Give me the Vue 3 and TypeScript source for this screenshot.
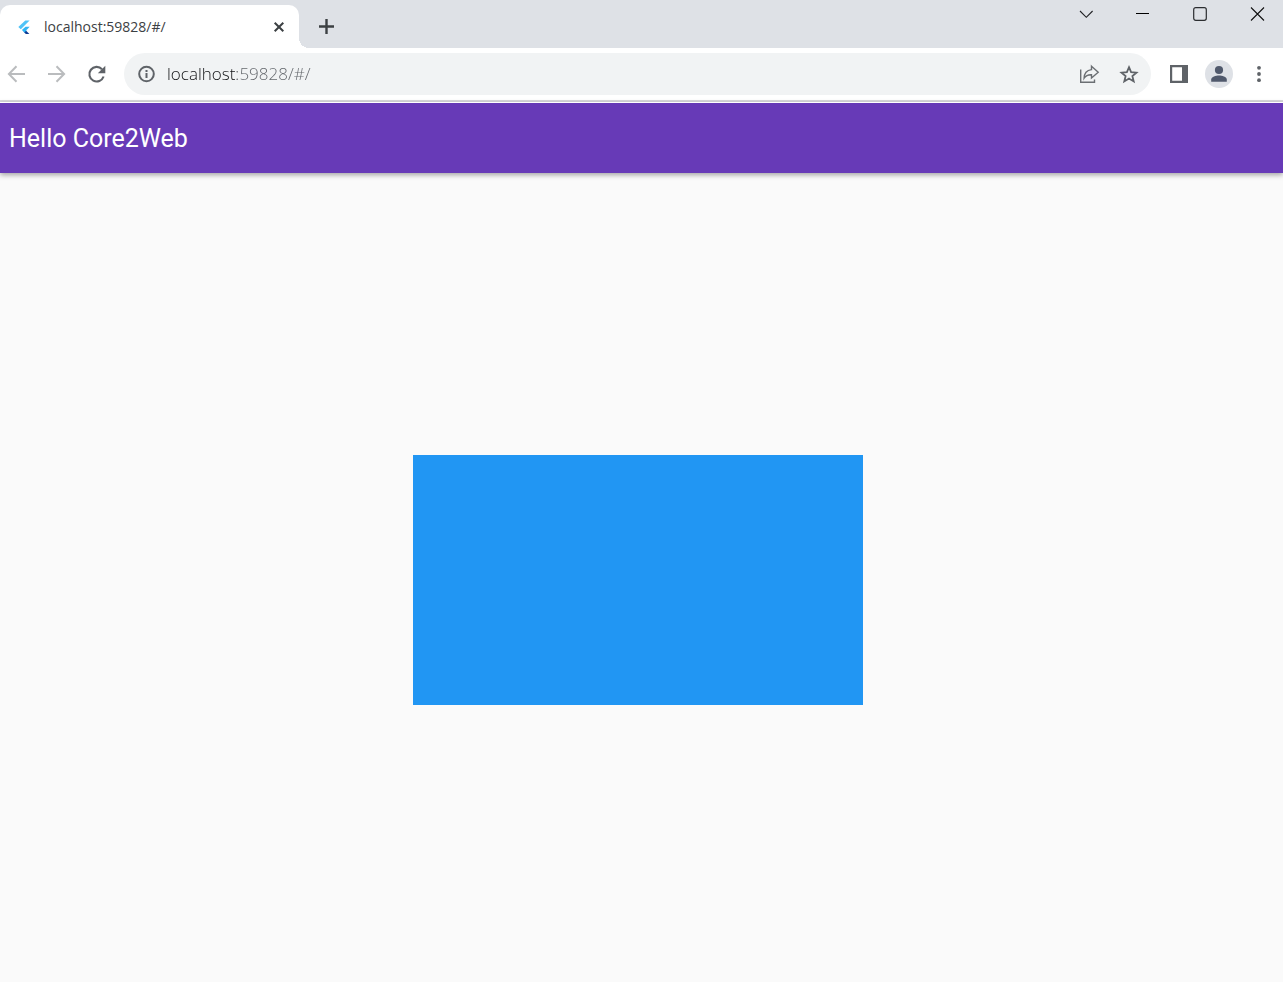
<script setup lang="ts">
import { ref } from 'vue'

const tabTitle = ref('localhost:59828/#/')
const address = ref('localhost:59828/#/')
const heading = ref('Hello Core2Web')
</script>

<template>
  <div class="browser">
    <header class="tab-strip">
      <div class="tab">
        <svg class="favicon" viewBox="0 0 16 16" aria-hidden="true">
          <path d="M9.3 1.6 13.6 1.6 4.8 10.2 2.3 8.1Z" fill="#4fc3f7" />
          <path d="M9.5 7.7H13.7L11.3 10.2 8.6 12.5 5.9 11Z" fill="#35b4f3" />
          <path d="M7.4 12.4 9.6 11.2 13.4 15H9.8Z" fill="#0d3c94" />
          <path d="M6.4 11.2 8.5 9.2 10.6 11.3 8.5 13.4Z" fill="#29b6f6" />
        </svg>
        <span class="tab-title">{{ tabTitle }}</span>
        <button class="tab-close" type="button" aria-label="Close tab">
          <svg viewBox="0 0 16 16"><path d="M3.7 3.7 12.3 12.3M12.3 3.7 3.7 12.3" stroke="#3c4043" stroke-width="2" /></svg>
        </button>
      </div>
      <button class="icon-button new-tab" type="button" aria-label="New tab">
        <svg viewBox="0 0 24 24"><path d="M12.5 5V20M5 12.5H20" stroke="#3c4043" stroke-width="2.4" /></svg>
      </button>
      <div class="window-controls">
        <button class="icon-button" type="button" aria-label="Search tabs">
          <svg viewBox="0 0 24 24"><path d="M6 9 12.3 15.3 18.6 9" stroke="#202124" stroke-width="1.1" fill="none" /></svg>
        </button>
        <button class="icon-button" type="button" aria-label="Minimize">
          <svg viewBox="0 0 24 24"><path d="M5 11.5H18" stroke="#000" /></svg>
        </button>
        <button class="icon-button" type="button" aria-label="Maximize">
          <svg viewBox="0 0 24 24"><rect x="5.7" y="5.7" width="12.6" height="12.6" rx="2" stroke="#2b2d30" stroke-width="1.2" fill="none" /></svg>
        </button>
        <button class="icon-button" type="button" aria-label="Close window">
          <svg viewBox="0 0 24 24"><path d="M6 5.5 19 18.5M19 5.5 6 18.5" stroke="#111" stroke-width="1.1" /></svg>
        </button>
      </div>
    </header>

    <nav class="toolbar" aria-label="Browser toolbar">
      <button class="icon-button" type="button" aria-label="Back">
        <svg viewBox="0 0 24 24"><path d="M21 12H5.5M12.5 4.2 4.9 12 12.5 19.8" stroke="#babcbe" stroke-width="2" fill="none" /></svg>
      </button>
      <button class="icon-button" type="button" aria-label="Forward">
        <svg viewBox="0 0 24 24"><path d="M4 12H19.5M12.5 4.2 20.1 12 12.5 19.8" stroke="#babcbe" stroke-width="2" fill="none" /></svg>
      </button>
      <button class="icon-button" type="button" aria-label="Reload">
        <svg viewBox="0 0 24 24"><path d="M19.6 14.5A7.3 7.3 0 1 1 18 7.2" stroke="#5f6368" stroke-width="2.1" fill="none" /><path d="M21.3 3.8V11.3H13.8Z" fill="#5f6368" /></svg>
      </button>

      <form class="address-bar" @submit.prevent>
        <button class="site-info" type="button" aria-label="Site information">
          <svg viewBox="0 0 22 22"><circle cx="10.5" cy="11" r="7.3" stroke="#5f6368" stroke-width="2" fill="none" /><path d="M10.5 10V15M10.5 7V9" stroke="#5f6368" stroke-width="2" /></svg>
        </button>
        <input v-model="address" class="address" type="text" aria-label="Address" spellcheck="false" />
        <button class="icon-button" type="button" aria-label="Share">
          <svg viewBox="0 0 24 24"><path d="M3.7 7.5V20.3H17.5V17.5" stroke="#6b6f73" stroke-width="1.4" fill="none" /><path d="M14.5 4.2 21.2 10.3 14.5 16V12.7C11 12.5 8.8 13.6 7.1 16.2 7.2 11.5 10 8.2 14.5 7.6Z" stroke="#6b6f73" stroke-width="1.4" fill="none" /></svg>
        </button>
        <button class="icon-button" type="button" aria-label="Bookmark">
          <svg viewBox="0 0 24 24"><path d="M12 5.2 14.1 10.1 19.5 10.6 15.4 14.1 16.7 19.4 12 16.5 7.3 19.4 8.6 14.1 4.5 10.6 9.9 10.1Z" stroke="#5f6368" stroke-width="1.8" fill="none" /></svg>
        </button>
      </form>

      <div class="toolbar-end">
        <button class="icon-button" type="button" aria-label="Side panel">
          <svg viewBox="0 0 24 24"><path fill-rule="evenodd" d="M3 3H21V21H3ZM5.2 5.2V18.8H15V5.2Z" fill="#5f6368" /></svg>
        </button>
        <button class="avatar" type="button" aria-label="Profile">
          <svg viewBox="0 0 28 28"><circle cx="14" cy="10" r="4.1" fill="#50596c" /><path d="M6.2 21.8V19.4C6.2 16.8 11 15.4 14 15.4S21.8 16.8 21.8 19.4V21.8Z" fill="#50596c" /></svg>
        </button>
        <button class="icon-button" type="button" aria-label="Browser menu">
          <svg viewBox="0 0 24 24" fill="#5f6368"><circle cx="12" cy="5.8" r="1.9" /><circle cx="12" cy="12" r="1.9" /><circle cx="12" cy="18.2" r="1.9" /></svg>
        </button>
      </div>
    </nav>

    <div class="app-bar">
      <h1>{{ heading }}</h1>
    </div>
    <main class="content">
      <div class="blue-box"></div>
    </main>
  </div>
</template>

<style>
body {
  margin: 0;
}
</style>

<style scoped>
.browser {
  display: flex;
  flex-direction: column;
  min-height: 100vh;
  background: #fafafa;
  font-family: "Open Sans", "Noto Sans", sans-serif;
}

button {
  display: block;
  flex: none;
  padding: 0;
  border: 0;
  background: none;
}

svg {
  display: block;
  width: 100%;
  height: 100%;
}

.icon-button {
  width: 24px;
  height: 24px;
}

.tab-strip {
  display: flex;
  align-items: flex-end;
  height: 48px;
  background: #dee1e6;
}

.tab {
  position: relative;
  display: flex;
  align-items: center;
  gap: 12px;
  box-sizing: border-box;
  width: 299px;
  height: 43px;
  padding: 0 12px 0 16px;
  border-radius: 10px 10px 0 0;
  background: #fff;
}

.tab::after {
  content: "";
  position: absolute;
  left: 100%;
  bottom: 0;
  width: 10px;
  height: 10px;
  background: radial-gradient(circle at 100% 0, transparent 10px, #fff 10px);
}

.favicon {
  flex: none;
  width: 16px;
  height: 16px;
}

.tab-title {
  flex: 1;
  color: #3c4043;
  font-size: 14px;
  line-height: 20px;
}

.tab-close {
  width: 16px;
  height: 16px;
}

.new-tab {
  align-self: center;
  margin: 4px 0 0 15px;
}

.window-controls {
  display: flex;
  align-self: flex-start;
  gap: 33px;
  margin-left: auto;
  padding: 2px 14px 0 0;
}

.toolbar {
  display: flex;
  align-items: center;
  gap: 16px;
  height: 52px;
  padding: 0 12px 0 4px;
  border-bottom: 2px solid #d9dadc;
  background: #fff;
}

.address-bar {
  display: flex;
  flex: 1;
  align-items: center;
  gap: 16px;
  height: 42px;
  padding: 0 10px 0 12px;
  border-radius: 21px;
  background: #f1f3f4;
}

.site-info {
  width: 22px;
  height: 22px;
}

.address {
  flex: 1;
  min-width: 0;
  height: 26px;
  margin-left: -7px;
  padding: 0;
  border: 0;
  outline: 0;
  background: linear-gradient(to right, #111214 70px, #5f6368 70px);
  -webkit-background-clip: text;
  background-clip: text;
  -webkit-text-fill-color: transparent;
  caret-color: #202124;
  font: 350 17px/26px "Open Sans", "Noto Sans", sans-serif;
}

.toolbar-end {
  display: flex;
  align-items: center;
  gap: 14px;
}

.avatar {
  width: 28px;
  height: 28px;
  border-radius: 50%;
  background: #dee1e6;
}

.app-bar {
  z-index: 1;
  display: flex;
  align-items: center;
  height: 68px;
  padding: 2px 9px 0;
  border-top: 1px solid #fff;
  background: #673ab7;
  box-shadow: 0 2px 5px rgba(0, 0, 0, 0.35);
}

.app-bar h1 {
  margin: 0;
  color: #fff;
  font: 400 25px/32px Roboto, sans-serif;
}

.content {
  display: flex;
  flex: 1;
  align-items: center;
  justify-content: center;
  padding: 5px 7px 0 0;
}

.blue-box {
  width: 450px;
  height: 250px;
  background: #2196f3;
}
</style>
